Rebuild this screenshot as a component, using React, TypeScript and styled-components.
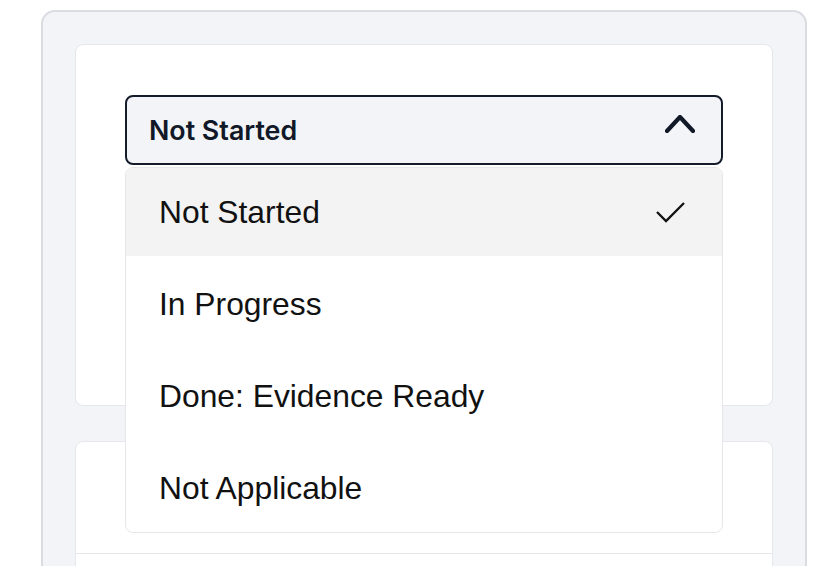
import React, { useState } from 'react';
import styled, { createGlobalStyle, css } from 'styled-components';

const GlobalStyle = createGlobalStyle`
  html, body {
    margin: 0;
    padding: 0;
    background: #ffffff;
    overflow: hidden;
  }
  * {
    box-sizing: border-box;
  }
`;

const Panel = styled.div`
  margin: 10px 25px 0 41px;
  min-height: 640px;
  padding: 32px;
  background: #f3f4f7;
  border: 2px solid #d9dce1;
  border-radius: 14px;
  display: flex;
  flex-direction: column;
  gap: 35px;
`;

const Card = styled.div`
  background: #ffffff;
  border: 1px solid #e5e7eb;
  border-radius: 8px;
`;

const StatusCard = styled(Card)`
  height: 362px;
  padding: 50px 49px;
`;

const DetailCard = styled(Card)`
  height: 240px;
`;

const DetailHeader = styled.div`
  height: 112px;
  border-bottom: 1px solid #e5e7eb;
`;

const SelectWrap = styled.div`
  position: relative;
`;

const Trigger = styled.button`
  width: 100%;
  height: 70px;
  display: flex;
  align-items: center;
  justify-content: space-between;
  padding: 0 26px 0 22px;
  background: #f3f4f7;
  border: 2px solid #141b2b;
  border-radius: 8px;
  font-family: Inter, 'Liberation Sans', sans-serif;
  font-size: 26.8px;
  font-weight: 600;
  color: #111827;
  cursor: pointer;

  svg {
    margin-bottom: 13px;
  }
`;

const Menu = styled.ul`
  position: absolute;
  top: calc(100% + 2px);
  left: 0;
  right: 0;
  margin: 0;
  padding: 0;
  list-style: none;
  display: flex;
  flex-direction: column;
  gap: 4px;
  background: #ffffff;
  border: 1px solid #e5e7eb;
  border-radius: 8px;
  overflow: hidden;
  z-index: 10;
`;

const Option = styled.li<{ $active?: boolean }>`
  height: 88px;
  display: flex;
  align-items: center;
  justify-content: space-between;
  padding: 0 37px 0 33px;
  font-family: 'Liberation Sans', Arial, sans-serif;
  font-size: 31.8px;
  color: #111111;
  cursor: pointer;
  ${(p) =>
    p.$active &&
    css`
      background: #f3f3f3;
    `}
`;

const ChevronUp = () => (
  <svg width="30" height="18" viewBox="0 0 30 18" fill="none">
    <polyline
      points="2,16 15,2 28,16"
      stroke="#111827"
      strokeWidth="4.2"
      strokeLinecap="round"
      strokeLinejoin="round"
    />
  </svg>
);

const Check = () => (
  <svg width="30" height="22" viewBox="0 0 30 22" fill="none">
    <polyline points="2,11 11,20 29,2" stroke="#111111" strokeWidth="2.3" />
  </svg>
);

const statuses = ['Not Started', 'In Progress', 'Done: Evidence Ready', 'Not Applicable'];

export default function App() {
  const [value, setValue] = useState(statuses[0]);
  const [open, setOpen] = useState(true);

  return (
    <>
      <GlobalStyle />
      <Panel>
        <StatusCard>
          <SelectWrap>
            <Trigger onClick={() => setOpen(!open)}>
              {value}
              <ChevronUp />
            </Trigger>
            {open && (
              <Menu>
                {statuses.map((s) => (
                  <Option key={s} $active={s === value} onClick={() => setValue(s)}>
                    {s}
                    {s === value && <Check />}
                  </Option>
                ))}
              </Menu>
            )}
          </SelectWrap>
        </StatusCard>
        <DetailCard>
          <DetailHeader />
        </DetailCard>
      </Panel>
    </>
  );
}
